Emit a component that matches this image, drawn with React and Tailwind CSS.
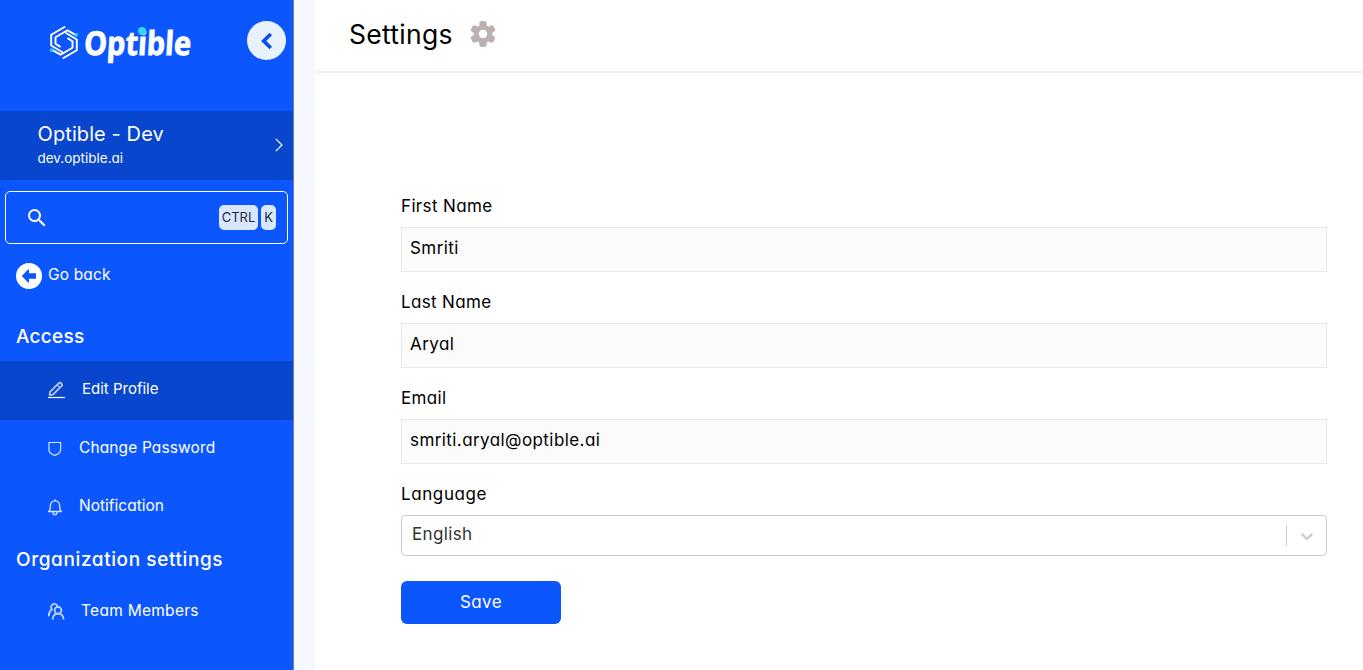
import React from "react";

const Logo = () => (
  <svg width="28" height="34" viewBox="0 0 28 34" fill="none" stroke="#fff" strokeWidth="1.900" strokeLinecap="round" strokeLinejoin="round">
    <path d="M14.500 1 1.200 8.800V19.500L12 26" />
    <path d="M25.500 8.800 17.500 4.300 5.500 11.300v6.500l4.500 2.800" />
    <path d="M13.500 32 26.800 24.200V13.500L16 7" />
    <path d="M2.500 24.200 10.500 28.700 22.500 21.700V15.200L18 12.400" />
    <circle cx="26.200" cy="8.900" r="1" fill="#35d3fb" stroke="#35d3fb" />
    <circle cx="1.800" cy="24.100" r="1" fill="#35d3fb" stroke="#35d3fb" />
  </svg>
);

const SearchIcon = () => (
  <svg width="24" height="24" viewBox="0 0 24 24" fill="#fff">
    <path d="M15.500 14h-.79l-.28-.27A6.471 6.471 0 0 0 16 9.500 6.500 6.500 0 1 0 9.500 16c1.610 0 3.090-.59 4.230-1.570l.27.28v.79l5 4.990L20.490 19l-4.990-5zm-6 0C7.010 14 5 11.990 5 9.500S7.010 5 9.500 5 14 7.010 14 9.500 11.990 14 9.500 14z" />
  </svg>
);

const BackIcon = () => (
  <svg width="26" height="26" viewBox="0 0 26 26">
    <circle cx="13" cy="13" r="13" fill="#fff" />
    <path d="M5.800 13l6.500-6.700.7.300v3.700h7v5.400h-7v3.700l-.7.300z" fill="#0b57fd" />
  </svg>
);

const EditIcon = () => (
  <svg width="17" height="18" viewBox="0 0 17 18" fill="none" stroke="#b4c8f4" strokeWidth="1.800" strokeLinejoin="round">
    <path d="M1.600 14.200 2 10.900 10.600 2.300a1.700 1.700 0 0 1 2.400 0l.4.400a1.700 1.700 0 0 1 0 2.400L4.900 13.700z" />
    <path d="M9.200 3.800l2.800 2.800" strokeWidth="1.200" />
    <path d="M0 16.500h17" stroke="#fff" strokeWidth="1.200" />
  </svg>
);

const ShieldIcon = () => (
  <svg width="14" height="16" viewBox="0 0 14 16" fill="none" stroke="#d5e3ff" strokeWidth="1.200" strokeLinejoin="round">
    <path d="M1 1.500h11.600v7.300c0 2.600-2.600 4.700-5.800 5.500C3.600 13.500 1 11.400 1 8.800z" />
  </svg>
);

const BellIcon = () => (
  <svg width="14" height="17" viewBox="0 0 14 17" fill="none" stroke="#d5e3ff" strokeWidth="1.300" strokeLinejoin="round" strokeLinecap="round">
    <path d="M7 .7v1M.7 12.500h12.600c-1.300-1.300-1.600-3-1.600-5C11.700 4 10 1.900 7 1.900S2.300 4 2.300 7.500c0 2-.3 3.700-1.600 5z" />
    <path d="M4.900 12.900c0 1.600.8 2.700 2.100 2.700s2.100-1.100 2.100-2.700" />
  </svg>
);

const TeamIcon = () => (
  <svg width="17" height="17" viewBox="0 0 17 17" fill="none" stroke="#c6d8ff" strokeWidth="1.700" strokeLinecap="round">
    <circle cx="10" cy="7.200" r="3.400" />
    <path d="M4.700 16c.3-3.200 2.400-5.300 5.300-5.300s5.200 2.100 5.600 5.300" />
    <path d="M9.200 2.500A3.300 3.300 0 1 0 3.900 6.400C2 7.600.9 9.600.8 12.600" />
  </svg>
);

const Gear = () => (
  <svg width="26" height="26" viewBox="-13 -13 26 26">
    <g fill="#bcb1b1">
      <circle r="9.300" />
      {[0, 60, 120].map((a) => (
        <rect key={a} x="-3.700" y="-12.900" width="7.400" height="25.800" rx="2.600" transform={`rotate(${a})`} />
      ))}
    </g>
    <circle r="4.200" fill="#fff" />
  </svg>
);

const Field = ({ label, value }) => (
  <div className="h-24">
    <div className="h-[34px] text-[17px] leading-[26px] tracking-[0.350px] text-black">{label}</div>
    <div className="flex h-[45px] items-center border border-[#e9e9e9] bg-[#fbfbfb] pb-px pl-2 text-[17px] tracking-[0.420px] text-black">
      {value}
    </div>
  </div>
);

export default function App() {
  return (
    <div className="flex h-[670px] w-[1363px] overflow-hidden bg-white font-['Inter',sans-serif] [font-feature-settings:'cv11']">
      <aside className="flex w-[294px] shrink-0 flex-col border-r border-[#6b7fa8] bg-[#0b57fd] text-white">
        <div className="flex h-[111px] items-start pl-[50px]">
          <div className="mt-[26px]"><Logo /></div>
          <div className="relative mt-[22px] ml-[5px] w-[108px] font-['Noto_Sans',sans-serif] text-[33px] leading-[42px] font-bold whitespace-nowrap">
            <div className="w-max origin-bottom-left [transform:scaleX(0.88)_skewX(-4deg)] [-webkit-text-stroke:0.8px_white] [paint-order:stroke_fill]">Optible</div>
            <span className="absolute top-[5px] left-[55px] size-2 rounded-full bg-[#35d3fb]" />
          </div>
          <div className="mt-[21px] ml-[56px] flex size-[39px] shrink-0 items-center justify-center rounded-full bg-[#e8f1fe]">
            <svg width="12" height="18" viewBox="0 0 12 18" fill="none" stroke="#0b50e6" strokeWidth="3.700">
              <path d="M9.800 2 2.700 9l7.100 7" />
            </svg>
          </div>
        </div>
        <div className="flex h-[69px] items-center justify-between bg-[#0746cd] pr-2.5 pb-0.5 pl-[37.500px]">
          <div>
            <div className="h-[27px] text-[20px] leading-[27px] tracking-[0.100px]">Optible - Dev</div>
            <div className="h-5 text-[13.500px] leading-5">dev.optible.ai</div>
          </div>
          <svg width="8" height="14" viewBox="0 0 8 14" fill="none" stroke="#fff" strokeWidth="1.200"><path d="M.8.800 7 7 .8 13.200" /></svg>
        </div>
        <div className="mt-[11px] ml-[5px] flex h-[53px] w-[283px] items-center justify-between rounded-[5px] border border-white pr-[11px] pl-[19px]">
          <SearchIcon />
          <div className="flex gap-[3px] text-[13px] text-[#222b3a]">
            <span className="flex h-[25px] w-[39px] items-center justify-center rounded-[5px] bg-[#d9e7fe]">CTRL</span>
            <span className="flex h-[25px] w-[15px] items-center justify-center rounded-[5px] bg-[#d9e7fe]">K</span>
          </div>
        </div>
        <div className="mt-[19px] flex h-[26px] items-center gap-1.5 pl-4">
          <BackIcon />
          <span className="pb-0.5 text-[15.500px] tracking-[0.150px]">Go back</span>
        </div>
        <div className="mt-[35px] h-[37px] pl-4 text-[19px] leading-[26px] font-medium tracking-[0.250px]">Access</div>
        <div className="flex h-[59px] items-center bg-[#0746cd] pb-[2px] pl-12">
          <EditIcon />
          <span className="ml-[17px] pb-px text-[15px]">Edit Profile</span>
        </div>
        <div className="flex h-[58px] items-center pl-12">
          <ShieldIcon />
          <span className="ml-[17px] pb-0.5 text-[15.500px] tracking-[0.120px]">Change Password</span>
        </div>
        <div className="flex h-[58px] items-center pl-12">
          <BellIcon />
          <span className="ml-[17px] pb-0.5 text-[15.500px]">Notification</span>
        </div>
        <div className="mt-[11px] h-[26px] pl-4 text-[19px] leading-[26px] font-medium tracking-[0.600px]">Organization settings</div>
        <div className="mt-[9px] flex h-[58px] items-center pl-12">
          <TeamIcon />
          <span className="ml-4 text-[15.500px] tracking-[0.280px]">Team Members</span>
        </div>
      </aside>
      <div className="w-[21px] shrink-0 bg-[#f5f8fe]" />
      <main className="flex-1">
        <header className="flex h-[73px] items-start border-b-2 border-[#f1f1f1] pl-[34px] text-black">
          <div className="mt-[17px] w-[121px] text-[26.500px] leading-[34px] tracking-[0.300px]">Settings</div>
          <div className="mt-[21px]"><Gear /></div>
        </header>
        <div className="ml-[86px] w-[926px] pt-[120px]">
          <Field label="First Name" value="Smriti" />
          <Field label="Last Name" value="Aryal" />
          <Field label="Email" value="smriti.aryal@optible.ai" />
          <div className="h-[34px] text-[17px] leading-[26px] tracking-[0.600px] text-black">Language</div>
          <div className="flex h-[41px] items-center rounded border border-[#cccccc] bg-white">
            <span className="flex-1 pb-px pl-[10px] text-[17px] tracking-[0.350px] text-[#333333]">English</span>
            <div className="h-[21px] w-px bg-[#cccccc]" />
            <div className="flex w-[39px] justify-center">
              <svg width="20" height="20" viewBox="0 0 20 20" fill="#cccccc"><path d="M4.516 7.548c0.436-0.446 1.043-0.481 1.576 0l3.908 3.747 3.908-3.747c0.533-0.481 1.141-0.446 1.574 0 0.436 0.445 0.408 1.197 0 1.615-0.406 0.418-4.695 4.502-4.695 4.502-0.217 0.223-0.502 0.335-0.787 0.335s-0.570-0.112-0.789-0.335c0 0-4.287-4.084-4.695-4.502s-0.436-1.170 0-1.615z" /></svg>
            </div>
          </div>
          <button className="mt-[25px] flex h-[43px] w-40 items-center justify-center rounded-md bg-[#0b57fd] text-[17px] tracking-[0.400px] text-white">Save</button>
        </div>
      </main>
    </div>
  );
}
